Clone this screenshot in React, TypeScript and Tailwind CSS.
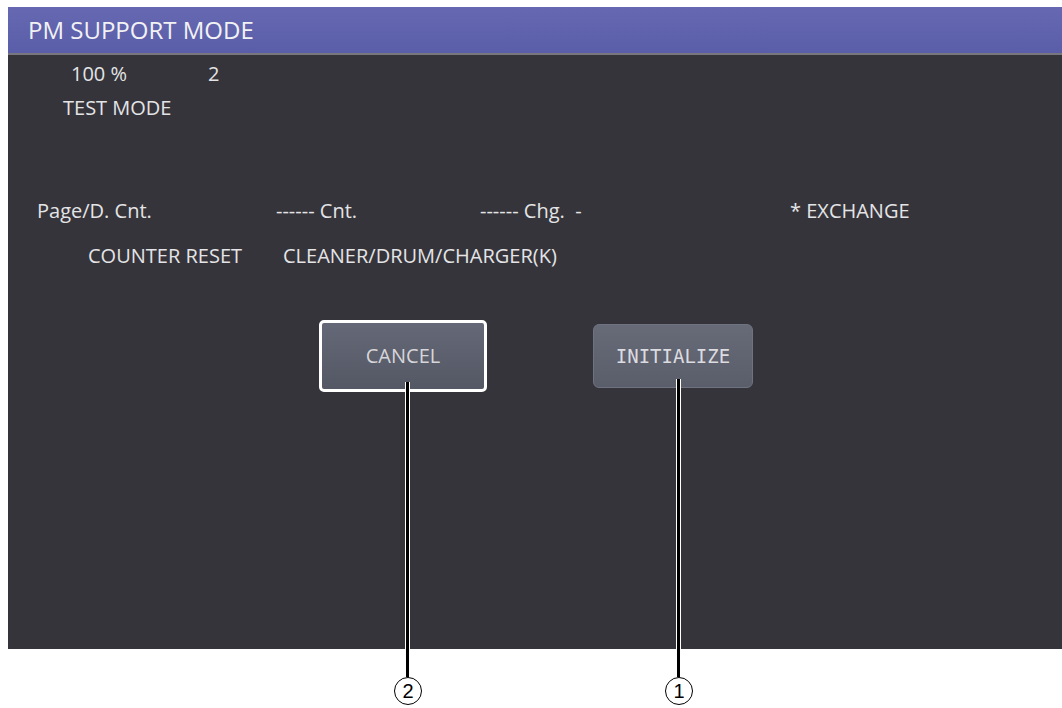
import React from 'react'

const body = "font-['Open_Sans',sans-serif] text-[20px] leading-[26px] text-[#e4e4e6]"

function Callout({ left, top, num }: { left: number; top: number; num: string }) {
  return (
    <>
      <div
        className='absolute w-[5px] bg-black border-x border-white'
        style={{ left: left - 2, top, height: 677 - top }}
      />
      <div
        className="absolute w-[28px] h-[28px] rounded-full border border-black bg-white flex items-center justify-center font-['Liberation_Sans',sans-serif] text-[20px] text-black"
        style={{ left: left - 13, top: 677 }}
      >
        {num}
      </div>
    </>
  )
}

export default function App() {
  return (
    <div className='relative w-[1062px] h-[708px] bg-white overflow-hidden'>
      <div className='ml-[8px] mt-[7px] w-[1054px] h-[642px] bg-[#35343a] flex flex-col'>
        <div className="h-[48px] flex-none flex items-center pl-[20px] bg-gradient-to-b from-[#6669b2] to-[#5a5da7] border-b-2 border-[#77777d] font-['Open_Sans',sans-serif] text-[24px] text-[#f2f2f4]">
          PM SUPPORT MODE
        </div>
        <div className={'flex flex-col pt-[6px] ' + body}>
          <div className='flex h-[26px] pl-[63px]'>
            <span className='w-[137px]'>100 %</span>
            <span>2</span>
          </div>
          <div className='flex h-[26px] pl-[55px] mt-[8px]'>TEST MODE</div>
          <div className='flex h-[26px] pl-[29px] mt-[77px]'>
            <span className='w-[239px]'>Page/D. Cnt.</span>
            <span className='w-[204px]'>------ Cnt.</span>
            <span className='w-[310px] whitespace-pre'>------ Chg.  -</span>
            <span>* EXCHANGE</span>
          </div>
          <div className='flex h-[26px] pl-[80px] mt-[19px]'>
            <span className='w-[195px]'>COUNTER RESET</span>
            <span>CLEANER/DRUM/CHARGER(K)</span>
          </div>
          <div className='flex items-center h-[72px] pl-[311px] mt-[51px]'>
            <div className="w-[168px] h-[72px] rounded-[5px] border-[3px] border-white bg-gradient-to-b from-[#656876] to-[#545764] flex items-center justify-center font-['Open_Sans',sans-serif] text-[20px] text-[#d6d6da]">
              CANCEL
            </div>
            <div className="ml-[106px] w-[160px] h-[64px] rounded-[6px] border border-[#6f7280] bg-gradient-to-b from-[#676a77] to-[#5a5d6a] flex items-center justify-center font-['DejaVu_Sans_Mono',monospace] text-[19px] text-[#dcdce0]">
              INITIALIZE
            </div>
          </div>
        </div>
      </div>
      <Callout left={407} top={382} num='2' />
      <Callout left={678} top={379} num='1' />
    </div>
  )
}
